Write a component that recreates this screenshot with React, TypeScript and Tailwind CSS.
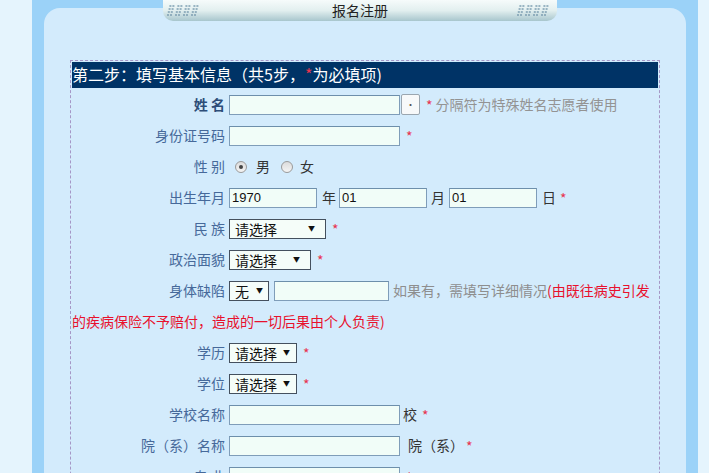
import type { ReactNode } from 'react'

const cjk = "font-['Noto_Sans_CJK_SC','Liberation_Sans',sans-serif]"

function Star({ className = '' }: { className?: string }) {
  return <span className={`text-[#e8334f] text-[14px] leading-none ${className}`}>*</span>
}

function Row({ label, bold, children }: { label: string; bold?: boolean; children: ReactNode }) {
  return (
    <div className="flex h-[31px] items-center">
      <div
        className={`w-[157px] shrink-0 pr-[4px] pb-[1px] text-right text-[14px] leading-none ${
          bold ? 'font-bold text-[#2d4d78]' : 'text-[#46699a]'
        }`}
      >
        {label}
      </div>
      <div className="flex items-center">{children}</div>
    </div>
  )
}

function Field({ className, value = '' }: { className: string; value?: string }) {
  return (
    <input
      readOnly
      value={value}
      className={`h-[20px] border border-[#7f9db9] border-t-[#6d8fab] bg-[#f1fdf8] px-[2px] font-['Liberation_Sans',sans-serif] text-[13px] text-[#111] outline-none ${className}`}
    />
  )
}

function Select({ className, text }: { className: string; text: string }) {
  return (
    <div
      className={`flex h-[20px] items-center justify-between border border-[#44505e] bg-[#f5fdf9] pl-[5px] pr-[10px] text-[14px] leading-none text-[#111] ${className}`}
    >
      <span>{text}</span>
      <span className="text-[7px]">▼</span>
    </div>
  )
}

function Radio({ checked }: { checked?: boolean }) {
  return (
    <span className="flex h-[12px] w-[12px] items-center justify-center rounded-full border border-[#9a9a9a] bg-gradient-to-b from-[#dcdcdc] to-[#f4f4f4]">
      {checked && <span className="h-[4px] w-[4px] rounded-full bg-[#444]" />}
    </span>
  )
}

function Dots() {
  const dots: { x: number; y: number }[] = []
  for (let g = 0; g < 4; g++) {
    for (let r = 0; r < 4; r++) {
      for (let c = 0; c < 2; c++) {
        dots.push({ x: g * 8 + c * 3 + (3 - r) * 0.8, y: r * 3 })
      }
    }
  }
  return (
    <svg width="36" height="13" viewBox="0 0 36 13">
      {dots.map((d, i) => (
        <rect key={i} x={d.x} y={d.y + 1} width="2" height="2" fill="#7d9fb1" opacity="0.75" />
      ))}
    </svg>
  )
}

export default function App() {
  return (
    <div className={`h-[473px] w-[709px] overflow-hidden bg-[#e5f4fd] pl-[32px] pr-[11px] ${cjk}`}>
      <div className="relative h-full bg-[#9bd2f8] px-[12px] pt-[8px]">
        {/* tab header */}
        <div className="absolute left-[131px] top-0 z-10 flex h-[21px] w-[394px] items-center justify-between rounded-b-[10px] bg-gradient-to-b from-[#f6fbfb] via-[#e2efef] to-[#a8c6cd] px-[4px]">
          <Dots />
          <span className="pb-[1px] text-[14px] leading-none text-[#222]">报名注册</span>
          <Dots />
        </div>

        <div className="h-full rounded-t-[16px] bg-[#d3ebfc] px-[26px] pt-[52px]">
          <div className="h-[500px] border border-dashed border-[#a597c6] p-[1px]">
            <div className="mb-[1px] flex h-[26px] items-center bg-[#003366] pb-[2px] text-[16px] leading-none text-white">
              第二步：填写基本信息（共5步，<span className="text-[#e8334f]">*</span>为必填项)
            </div>

            <Row label="姓 名" bold>
              <Field className="w-[171px]" />
              <span className="ml-[1px] flex h-[21px] w-[19px] items-center justify-center rounded-[2px] border border-[#9aa6b0] bg-[#f7f9fa] text-[10px] text-[#555]">
                ·
              </span>
              <Star className="ml-[6px]" />
              <span className="ml-[3px] pb-[1px] text-[14px] leading-none text-[#939393]">分隔符为特殊姓名志愿者使用</span>
            </Row>

            <Row label="身份证号码">
              <Field className="w-[171px]" />
              <Star className="ml-[6px]" />
            </Row>

            <Row label="性 别">
              <span className="ml-[6px]">
                <Radio checked />
              </span>
              <span className="ml-[9px] pb-[1px] text-[14px] leading-none text-[#333]">男</span>
              <span className="ml-[11px]">
                <Radio />
              </span>
              <span className="ml-[7px] pb-[1px] text-[14px] leading-none text-[#333]">女</span>
            </Row>

            <Row label="出生年月">
              <Field className="w-[88px]" value="1970" />
              <span className="ml-[5px] mr-[3px] pb-[1px] text-[14px] leading-none text-[#333]">年</span>
              <Field className="w-[88px]" value="01" />
              <span className="ml-[4px] mr-[4px] pb-[1px] text-[14px] leading-none text-[#333]">月</span>
              <Field className="w-[88px]" value="01" />
              <span className="ml-[5px] pb-[1px] text-[14px] leading-none text-[#333]">日</span>
              <Star className="ml-[4px]" />
            </Row>

            <Row label="民 族">
              <Select className="w-[97px]" text="请选择" />
              <Star className="ml-[6px]" />
            </Row>

            <Row label="政治面貌">
              <Select className="w-[82px]" text="请选择" />
              <Star className="ml-[6px]" />
            </Row>

            <Row label="身体缺陷">
              <Select className="w-[40px] !pr-[5px]" text="无" />
              <Field className="ml-[5px] w-[115px]" />
              <span className="ml-[4px] whitespace-nowrap pb-[1px] text-[14px] leading-none text-[#8e8e8e]">
                如果有，需填写详细情况<span className="text-[#e8112d]">(由既往病史引发</span>
              </span>
            </Row>
            <div className="flex h-[31px] items-center pb-[1px] text-[14px] leading-none text-[#e8112d]">
              的疾病保险不予赔付，造成的一切后果由个人负责)
            </div>

            <Row label="学历">
              <Select className="w-[68px] !pr-[6px]" text="请选择" />
              <Star className="ml-[6px]" />
            </Row>

            <Row label="学位">
              <Select className="w-[68px] !pr-[6px]" text="请选择" />
              <Star className="ml-[6px]" />
            </Row>

            <Row label="学校名称">
              <Field className="w-[171px]" />
              <span className="ml-[3px] pb-[1px] text-[14px] leading-none text-[#333]">校</span>
              <Star className="ml-[5px]" />
            </Row>

            <Row label="院（系）名称">
              <Field className="w-[171px]" />
              <span className="ml-[8px] pb-[1px] text-[14px] leading-none text-[#333]">院（系）</span>
              <Star className="ml-[2px]" />
            </Row>

            <Row label="专 业">
              <Field className="w-[171px]" />
              <Star className="ml-[6px]" />
            </Row>
          </div>
        </div>
      </div>
    </div>
  )
}
